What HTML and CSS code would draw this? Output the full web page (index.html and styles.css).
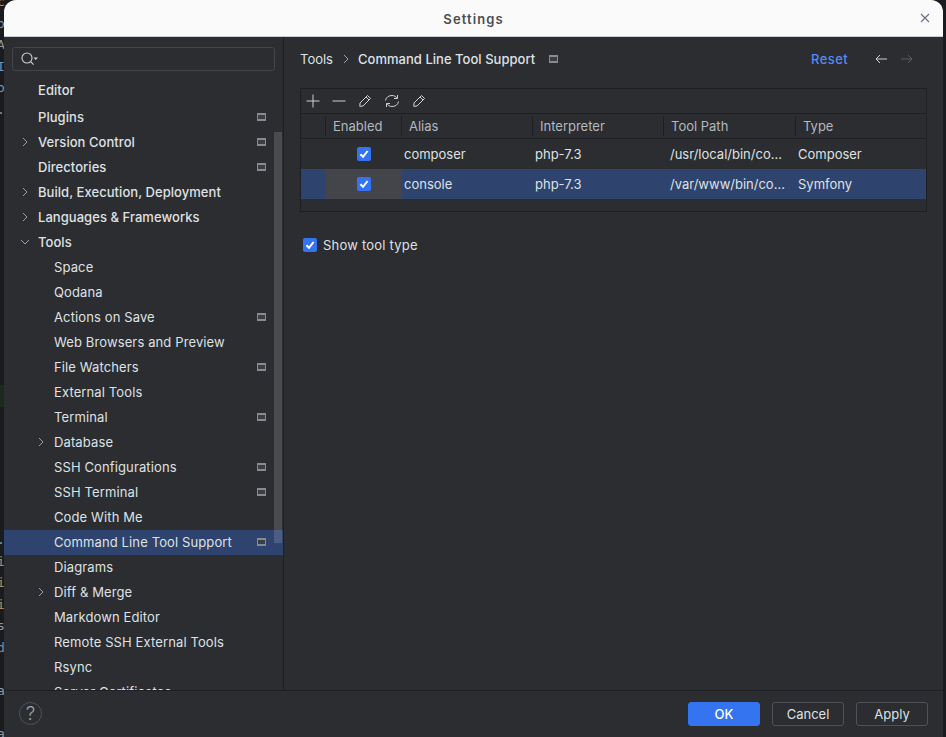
FILE: index.html
```html
<!DOCTYPE html>
<html lang="en">

<head>
    <meta charset="UTF-8">
    <title>Settings</title>
    <link rel="stylesheet" href="styles.css">
</head>

<body>
    <svg class="defs" width="0" height="0">
        <symbol id="page" viewBox="0 0 9 8">
            <rect x="0" y="0" width="9" height="8" fill="#868a91"></rect>
            <rect x="1" y="2" width="7" height="4" fill="#3c3e43"></rect>
        </symbol>
        <symbol id="right" viewBox="0 0 10 10">
            <path d="M3 1 L7 5 L3 9" fill="none" stroke="#9da0a8" stroke-width="1"></path>
        </symbol>
        <symbol id="down" viewBox="0 0 10 10">
            <path d="M1 3 L5 7 L9 3" fill="none" stroke="#9da0a8" stroke-width="1"></path>
        </symbol>
        <symbol id="pencil" viewBox="0 0 14 14">
            <path d="M9.5 1.5 L12.5 4.5 L5 12 L1.8 12.4 L2 9 Z M8 3 L11 6" fill="none" stroke="#ced0d6" stroke-width="1"></path>
        </symbol>
        <symbol id="tick" viewBox="0 0 14 14">
            <path d="M3.4 7.2 L6 9.8 L10.6 4" fill="none" stroke="#fff" stroke-width="2"></path>
        </symbol>
    </svg>

    <!-- editor behind the dialog, only a sliver of it shows -->
    <div class="behind">
        <span class="or">c</span><span>o</span><span>A</span><span class="bl">I</span><span>o</span><span>.</span>
        <span class="gap-a"></span>
        <span class="verde"></span>
        <span class="gap-b"></span>
        <span>.</span><span class="or">i</span><span class="or">i</span><span class="or">i</span><span>s</span><span class="bl">d</span><span class="blank"></span><span>a</span><span class="blank"></span><span>a</span>
    </div>

    <div class="dialog">
        <div class="titulo">
            <span>Settings</span>
            <svg class="fechar" width="10" height="10" viewBox="0 0 10 10">
                <path d="M1 1 L9 9 M9 1 L1 9" stroke="#6c707e" stroke-width="1.1"></path>
            </svg>
        </div>

        <div class="corpo">
            <div class="lateral">
                <div class="busca">
                    <svg width="22" height="16" viewBox="0 0 22 16">
                        <circle cx="8" cy="7" r="5" fill="none" stroke="#ced0d6" stroke-width="1.1"></circle>
                        <path d="M11.6 10.6 L14.6 13.6" stroke="#ced0d6" stroke-width="1.1"></path>
                        <path d="M14.5 6.5 H19 L16.7 9 Z" fill="#ced0d6"></path>
                    </svg>
                </div>
                <ul class="arvore">
                    <li class="topo primeiro">Editor</li>
                    <li class="topo">Plugins<svg class="pg"><use href="#page"></use></svg></li>
                    <li class="topo"><svg class="seta"><use href="#right"></use></svg>Version Control<svg class="pg"><use href="#page"></use></svg></li>
                    <li class="topo">Directories<svg class="pg"><use href="#page"></use></svg></li>
                    <li class="topo"><svg class="seta"><use href="#right"></use></svg>Build, Execution, Deployment</li>
                    <li class="topo"><svg class="seta"><use href="#right"></use></svg>Languages &amp; Frameworks</li>
                    <li class="topo"><svg class="seta"><use href="#down"></use></svg>Tools</li>
                    <li>Space</li>
                    <li>Qodana</li>
                    <li>Actions on Save<svg class="pg"><use href="#page"></use></svg></li>
                    <li>Web Browsers and Preview</li>
                    <li>File Watchers<svg class="pg"><use href="#page"></use></svg></li>
                    <li>External Tools</li>
                    <li>Terminal<svg class="pg"><use href="#page"></use></svg></li>
                    <li><svg class="seta"><use href="#right"></use></svg>Database</li>
                    <li>SSH Configurations<svg class="pg"><use href="#page"></use></svg></li>
                    <li>SSH Terminal<svg class="pg"><use href="#page"></use></svg></li>
                    <li>Code With Me</li>
                    <li class="ativo">Command Line Tool Support<svg class="pg"><use href="#page"></use></svg></li>
                    <li>Diagrams</li>
                    <li><svg class="seta"><use href="#right"></use></svg>Diff &amp; Merge</li>
                    <li>Markdown Editor</li>
                    <li>Remote SSH External Tools</li>
                    <li>Rsync</li>
                    <li>Server Certificates</li>
                </ul>
                <div class="rolagem"></div>
            </div>

            <div class="conteudo">
                <div class="cabecalho">
                    <span>Tools</span>
                    <svg class="sep"><use href="#right"></use></svg>
                    <span class="forte">Command Line Tool Support</span>
                    <svg class="pg-titulo"><use href="#page"></use></svg>
                    <span class="reset">Reset</span>
                    <svg class="nav" width="14" height="12" viewBox="0 0 14 12">
                        <path d="M13 6 H2 M6 2 L2 6 L6 10" fill="none" stroke="#ced0d6" stroke-width="1"></path>
                    </svg>
                    <svg class="nav" width="14" height="12" viewBox="0 0 14 12">
                        <path d="M1 6 H12 M8 2 L12 6 L8 10" fill="none" stroke="#5a5d63" stroke-width="1"></path>
                    </svg>
                </div>

                <div class="tabela">
                    <div class="barra">
                        <svg width="14" height="14" viewBox="0 0 14 14"><path d="M7 .5 V13.5 M.5 7 H13.5" stroke="#ced0d6" stroke-width="1"></path></svg>
                        <svg width="14" height="14" viewBox="0 0 14 14"><path d="M.5 7 H13.5" stroke="#ced0d6" stroke-width="1"></path></svg>
                        <svg width="14" height="14"><use href="#pencil"></use></svg>
                        <svg width="16" height="14" viewBox="0 0 16 14">
                            <path d="M1.5 6.5 C2 3 5 1.5 8 1.5 C10.5 1.5 12 2.8 13 4.2 M13.5 1 V4.5 H10 M14.5 7.5 C14 11 11 12.5 8 12.5 C5.5 12.5 4 11.2 3 9.8 M2.5 13 V9.5 H6" fill="none" stroke="#ced0d6" stroke-width="1"></path>
                        </svg>
                        <svg width="14" height="14"><use href="#pencil"></use></svg>
                    </div>
                    <div class="linha cab">
                        <div></div>
                        <div>Enabled</div>
                        <div>Alias</div>
                        <div>Interpreter</div>
                        <div>Tool Path</div>
                        <div>Type</div>
                    </div>
                    <div class="linha">
                        <div></div>
                        <div class="marca"><span class="check"><svg width="14" height="14"><use href="#tick"></use></svg></span></div>
                        <div>composer</div>
                        <div>php-7.3</div>
                        <div class="caminho">/usr/local/bin/co...</div>
                        <div>Composer</div>
                    </div>
                    <div class="linha sel">
                        <div></div>
                        <div class="marca"><span class="check"><svg width="14" height="14"><use href="#tick"></use></svg></span></div>
                        <div>console</div>
                        <div>php-7.3</div>
                        <div class="caminho">/var/www/bin/co...</div>
                        <div>Symfony</div>
                    </div>
                </div>

                <div class="opcao">
                    <span class="check"><svg width="14" height="14"><use href="#tick"></use></svg></span>
                    <span>Show tool type</span>
                </div>
            </div>
        </div>

        <div class="rodape">
            <div class="ajuda">?</div>
            <div class="btn azul">OK</div>
            <div class="btn">Cancel</div>
            <div class="btn">Apply</div>
        </div>
    </div>
</body>

</html>
```

FILE: styles.css
```css
* {
    margin: 0;
    padding: 0;
    box-sizing: border-box;
}

body {
    width: 946px;
    height: 737px;
    overflow: hidden;
    background-color: #1a1b1e;
    font-family: Inter, "Noto Sans", sans-serif;
    font-size: 13px;
    color: #dfe1e5;
}

.defs {
    position: absolute;
}

.behind {
    position: absolute;
    left: -3px;
    top: -9px;
    width: 8px;
    display: flex;
    flex-direction: column;
    font-family: "DejaVu Sans Mono", monospace;
    font-size: 13px;
    line-height: 21.5px;
    color: #8f98a3;
}

.behind .or {
    color: #b8925f;
}

.behind .bl {
    color: #6f93b5;
}

.behind .gap-a {
    height: 265px;
}

.behind .verde {
    height: 22px;
    background-color: #1b2a1c;
}

.behind .gap-b {
    height: 122px;
}

.behind .blank {
    height: 21.5px;
}

.dialog {
    position: absolute;
    left: 4px;
    top: 0;
    width: 939px;
    height: 737px;
    display: flex;
    flex-direction: column;
    background-color: #2b2d30;
    border-radius: 12px 12px 0 0;
    overflow: hidden;
}

.titulo {
    position: relative;
    flex: none;
    height: 37px;
    padding-top: 2px;
    display: flex;
    align-items: center;
    justify-content: center;
    background-color: #fafafa;
    border-bottom: 1px solid #c9ccd6;
    color: #4a4d55;
    font-weight: 600;
    letter-spacing: 1.1px;
}

.fechar {
    position: absolute;
    right: 13px;
    top: 13px;
}

.corpo {
    flex: none;
    height: 653px;
    display: flex;
}

.lateral {
    position: relative;
    flex: none;
    width: 280px;
    border-right: 1px solid #1e1f22;
    overflow: hidden;
}

.busca {
    display: flex;
    align-items: center;
    height: 24px;
    margin: 10px 8px 7px 8px;
    padding-left: 6px;
    border: 1px solid #43454a;
    border-radius: 3px;
}

.arvore {
    list-style-type: none;
}

.arvore li {
    position: relative;
    height: 25px;
    line-height: 25px;
    padding-left: 50px;
    white-space: nowrap;
    letter-spacing: 0.12px;
}

.arvore li.topo {
    padding-left: 34px;
    font-weight: 500;
    letter-spacing: 0.05px;
}

.arvore li.primeiro {
    margin-bottom: 2px;
}

.arvore li.ativo {
    background-color: #2e436e;
}

.seta {
    position: absolute;
    left: 32px;
    top: 7px;
    width: 10px;
    height: 10px;
}

.topo .seta {
    left: 16px;
}

.pg {
    position: absolute;
    left: 253px;
    top: 8px;
    width: 9px;
    height: 8px;
}

.rolagem {
    position: absolute;
    left: 270px;
    top: 95px;
    width: 8px;
    height: 411px;
    background-color: rgba(223, 225, 229, 0.17);
}

.conteudo {
    flex: 1;
    padding: 0 16px 0 16px;
}

.cabecalho {
    display: flex;
    align-items: center;
    height: 24px;
    margin-top: 10px;
    padding-right: 13px;
}

.sep {
    width: 10px;
    height: 10px;
    margin: 0 7px 0 8px;
}

.forte {
    font-weight: 500;
    letter-spacing: 0.03px;
}

.pg-titulo {
    width: 9px;
    height: 8px;
    margin-left: 14px;
}

.reset {
    margin-left: auto;
    margin-right: 26px;
    font-weight: 500;
    letter-spacing: 0.4px;
    color: #548af7;
}

.nav {
    margin-right: 12px;
}

.nav:last-child {
    margin-right: 0;
}

.tabela {
    margin-top: 17px;
    height: 124px;
    border: 1px solid #1e1f22;
}

.barra {
    display: flex;
    align-items: center;
    gap: 12px;
    height: 25px;
    padding-left: 5px;
    border-bottom: 1px solid #1e1f22;
}

.linha {
    display: grid;
    grid-template-columns: 24px 76px 131px 131px 132px 1fr;
    height: 30px;
    line-height: 30px;
    white-space: nowrap;
}

.linha > div {
    padding-left: 3px;
}

.linha > .caminho {
    padding-left: 7px;
}

.linha.cab {
    height: 25px;
    line-height: 24px;
    align-items: center;
    border-bottom: 1px solid #1e1f22;
    color: #b4b8bf;
}

.linha.cab > div {
    height: 20px;
    line-height: 20px;
    padding-left: 7px;
    border-left: 1px solid #1e1f22;
}

.linha.cab > div:first-child {
    border-left: none;
}

.linha .marca {
    display: flex;
    align-items: center;
    justify-content: center;
    padding-left: 1px;
}

.sel {
    background-color: #2e436e;
}

.sel .marca {
    background-color: #43454a;
}

.check {
    display: block;
    flex: none;
    width: 14px;
    height: 14px;
    background-color: #3574f0;
    border-radius: 2px;
}

.check svg {
    display: block;
}

.opcao {
    display: flex;
    align-items: center;
    gap: 6px;
    height: 16px;
    margin-top: 25px;
    padding-left: 3px;
    letter-spacing: 0.22px;
}

.rodape {
    flex: none;
    height: 47px;
    display: flex;
    align-items: flex-start;
    gap: 12px;
    padding: 11px 15px 0 15px;
    border-top: 1px solid #1e1f22;
}

.ajuda {
    width: 23px;
    height: 23px;
    margin-right: auto;
    border: 1px solid #4e5157;
    border-radius: 50%;
    text-align: center;
    line-height: 21px;
    font-size: 19px;
    font-weight: 300;
    color: #9da0a8;
}

.btn {
    width: 72px;
    height: 24px;
    border: 1px solid #4e5157;
    border-radius: 3px;
    text-align: center;
    line-height: 22px;
}

.azul {
    background-color: #3574f0;
    border-color: #3574f0;
    color: #fff;
    font-weight: 500;
}
```
